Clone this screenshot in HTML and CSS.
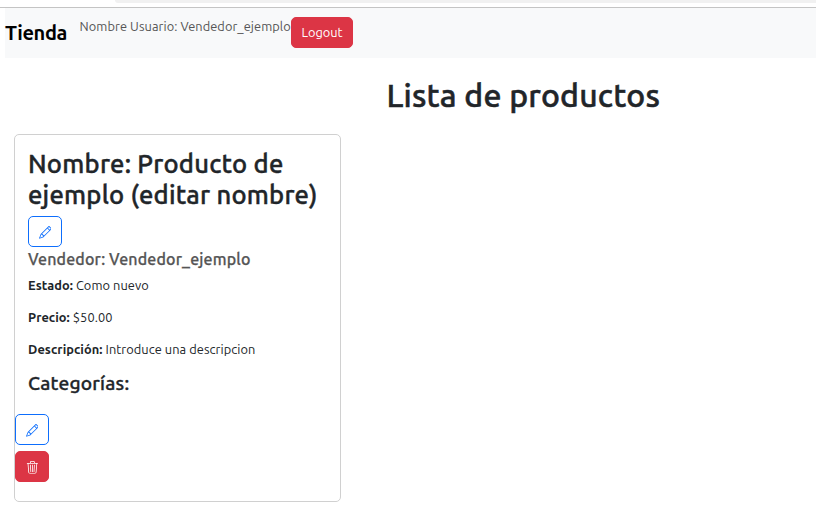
FILE: index.html
```html
<!DOCTYPE html>
<html lang="es">
<head>
<meta charset="utf-8">
<title>Tienda</title>
<link rel="stylesheet" href="styles.css">
</head>
<body>
<svg class="sprite" aria-hidden="true">
  <symbol id="pencil" viewBox="0 0 16 16"><path d="M12.146.146a.5.5 0 0 1 .708 0l3 3a.5.5 0 0 1 0 .708l-10 10a.5.5 0 0 1-.168.11l-5 2a.5.5 0 0 1-.65-.65l2-5a.5.5 0 0 1 .11-.168l10-10zM11.207 2.5 13.5 4.793 14.793 3.5 12.5 1.207 11.207 2.5zm1.586 3L10.5 3.207 4 9.707V10h.5a.5.5 0 0 1 .5.5v.5h.5a.5.5 0 0 1 .5.5v.5h.293l6.5-6.5zm-9.761 5.175-.106.106-1.528 3.821 3.821-1.528.106-.106A.5.5 0 0 1 5 12.5V12h-.5a.5.5 0 0 1-.5-.5V11h-.5a.5.5 0 0 1-.468-.325z"/></symbol>
  <symbol id="trash" viewBox="0 0 16 16"><path d="M6.5 1h3a.5.5 0 0 1 .5.5v1H6v-1a.5.5 0 0 1 .5-.5ZM11 2.5v-1A1.5 1.5 0 0 0 9.500 0h-3A1.5 1.5 0 0 0 5 1.5v1H1.500a.5.5 0 0 0 0 1h.538l.853 10.660A2 2 0 0 0 4.885 16h6.230a2 2 0 0 0 1.994-1.840l.853-10.660h.538a.5.5 0 0 0 0-1H11Zm1.958 1-.846 10.580a1 1 0 0 1-.997.920h-6.230a1 1 0 0 1-.997-.920L3.042 3.500h9.916Zm-7.487 1a.5.5 0 0 1 .528.470l.5 8.500a.5.5 0 0 1-.998.060L5 5.030a.5.5 0 0 1 .470-.530Zm5.058 0a.5.5 0 0 1 .470.530l-.5 8.500a.5.5 0 1 1-.998-.060l.5-8.500a.5.5 0 0 1 .528-.470ZM8 4.500a.5.5 0 0 1 .5.5v8.500a.5.5 0 0 1-1 0V5a.5.5 0 0 1 .5-.5Z"/></symbol>
</svg>
<div class="browser-edge"><div class="address"></div></div>
<nav class="navbar">
  <a class="brand">Tienda</a>
  <span class="user">Nombre Usuario: Vendedor_ejemplo</span>
  <button class="btn btn-danger logout">Logout</button>
</nav>
<main>
  <h1>Lista de productos</h1>
  <article class="card">
    <div class="card-body">
      <h2><span>Nombre: Producto de</span> <span>ejemplo (editar nombre)</span></h2>
      <button class="btn btn-outline" aria-label="Editar nombre"><svg><use href="#pencil"/></svg></button>
      <h3>Vendedor: Vendedor_ejemplo</h3>
      <p><strong>Estado:</strong> Como nuevo</p>
      <p><strong>Precio:</strong> $50.00</p>
      <p><strong>Descripción:</strong> Introduce una descripcion</p>
      <h4>Categorías:</h4>
    </div>
    <div class="actions">
      <button class="btn btn-outline" aria-label="Editar"><svg><use href="#pencil"/></svg></button>
      <button class="btn btn-danger" aria-label="Eliminar"><svg><use href="#trash"/></svg></button>
    </div>
  </article>
</main>
</body>
</html>
```
FILE: styles.css
```css
* { box-sizing: border-box; }
body { margin: 0; background: #fff; color: #212529; font: 12.8px/19px Ubuntu, "Noto Sans", sans-serif; letter-spacing: .07px; overflow: hidden; white-space: nowrap; }
.sprite { display: none; }
.browser-edge { height: 8px; border-bottom: 1px solid #c4c4c4; }
.address { height: 3px; margin-left: 115px; background: #f1f1f1; border-bottom-left-radius: 3px; }
.navbar { display: flex; align-items: flex-start; height: 50px; margin-left: 5px; padding-top: 9px; background: #f8f9fa; }
.brand { width: 74.6px; color: #000; font-size: 20px; font-weight: 700; line-height: 32px; letter-spacing: -.35px; }
.user { width: 211.4px; color: #555; }
.btn { display: flex; align-items: center; justify-content: center; width: 34px; height: 31px; padding: 0; border: 1px solid; border-radius: 5px; font: inherit; }
.btn svg { width: 12.8px; height: 12.8px; margin-top: 2px; fill: currentColor; }
.btn-danger { color: #fff; background: #dc3545; border-color: #dc3545; }
.btn-outline { color: #0d6efd; background: #fff; border-color: #0d6efd; }
.logout { width: 62px; }
h1, h2, h3, h4, p { margin: 0; font-weight: 500; }
h1, h2, h3, h4 { -webkit-text-stroke: .25px currentColor; }
h1 { margin: 18px 0 20px 386.5px; font-size: 32px; line-height: 38px; letter-spacing: .18px; -webkit-text-stroke-width: .5px; }
.card { width: 327px; height: 368px; margin-left: 14px; border: 1px solid #d0d0d0; border-radius: 5px; }
.card-body { padding: 13px 13px 0; }
h2 { margin-bottom: 6px; font-size: 25.6px; line-height: 31px; letter-spacing: .22px; -webkit-text-stroke-width: .4px; }
h2 span { display: block; }
h3 { margin-bottom: 5px; color: #555; font-size: 16px; line-height: 24px; letter-spacing: .15px; }
p { height: 19px; margin-bottom: 13px; font-weight: 400; }
h4 { font-size: 19.2px; line-height: 23px; letter-spacing: .2px; -webkit-text-stroke-width: .35px; }
.actions { display: flex; flex-direction: column; gap: 6px; margin-top: 19px; }
```
